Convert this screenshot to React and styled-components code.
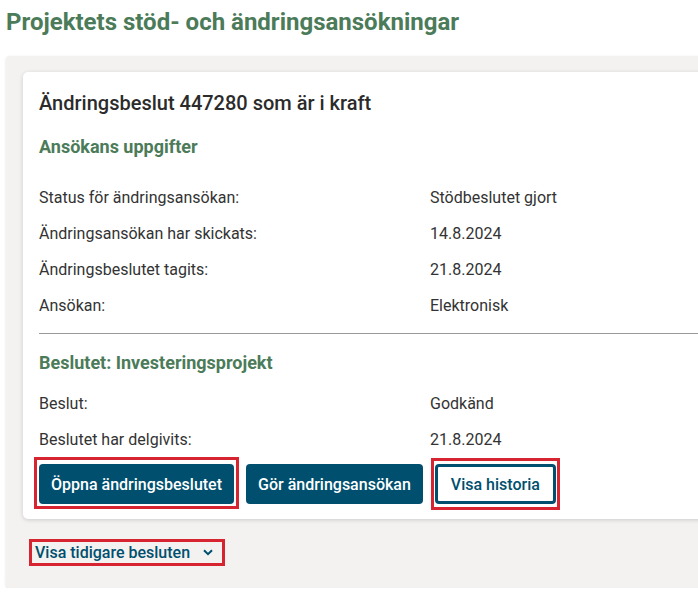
import React from "react";
import styled, { createGlobalStyle } from "styled-components";

const Global = createGlobalStyle`
  html, body { margin: 0; padding: 0; background: #fff; overflow: hidden; }
  body { font-family: Roboto, "Liberation Sans", Arial, sans-serif; color: #333; }
  * { box-sizing: border-box; }
`;

const Page = styled.div`
  padding: 6px 0 0 6px;
  width: 800px;
`;

const Title = styled.h1`
  margin: 0 0 18px 0;
  font-size: 24px;
  line-height: 32px;
  font-weight: 700;
  color: #4b7b59;
`;

const Panel = styled.section`
  width: 760px;
  background: #f3f2f1;
  border-radius: 4px;
  box-shadow: 0 1px 3px rgba(0, 0, 0, 0.12);
  padding: 16px 0 25px 17px;
`;

const Card = styled.div`
  background: #fff;
  border-radius: 5px;
  box-shadow: 0 1px 4px rgba(0, 0, 0, 0.16);
  padding: 17px 16px 15px 16px;
  margin-bottom: 23px;
`;

const CardTitle = styled.h2`
  margin: 0 0 18px 0;
  font-size: 20px;
  line-height: 28px;
  font-weight: 500;
  color: #2b2b2b;
`;

const SectionTitle = styled.h3`
  margin: 0 0 ${(p) => p.$bottom || 0}px 0;
  font-size: 18px;
  line-height: 24px;
  font-weight: 700;
  color: #4b7b59;
`;

const InfoList = styled.dl`
  display: grid;
  grid-template-columns: 391px 1fr;
  margin: 0;
`;

const Label = styled.dt`
  font-size: 16px;
  line-height: 36px;
  margin: 0;
`;

const Value = styled.dd`
  font-size: 16px;
  line-height: 36px;
  margin: 0;
`;

const Divider = styled.hr`
  border: none;
  border-top: 1px solid #9a9a9a;
  margin: 9px 0 17px 0;
`;

const Actions = styled.div`
  display: flex;
  gap: 12px;
  margin-top: 6px;
`;

const Button = styled.button`
  position: relative;
  height: 40px;
  padding: 0 ${(p) => (p.$secondary ? 13 : 12)}px;
  font-family: inherit;
  font-size: 16px;
  font-weight: 500;
  border-radius: 4px;
  cursor: pointer;
  border: ${(p) => (p.$secondary ? "3px" : "0")} solid #004f6e;
  background: ${(p) => (p.$secondary ? "#fff" : "#004f6e")};
  color: ${(p) => (p.$secondary ? "#004f6e" : "#fff")};
  outline: none;

  &::after {
    content: "";
    display: ${(p) => (p.$focus ? "block" : "none")};
    position: absolute;
    inset: ${(p) => (p.$secondary ? "-9px -7px -9px -7px" : "-7px -5px -5px -5px")};
    border: 3px solid #d62430;
    pointer-events: none;
  }
`;

const Toggle = styled.button`
  display: inline-flex;
  align-items: center;
  gap: 13px;
  height: 21px;
  padding: 0 9px 0 3px;
  margin-left: 9px;
  border: none;
  background: transparent;
  font-family: inherit;
  font-size: 16px;
  line-height: 21px;
  font-weight: 500;
  color: #004f6e;
  outline: 3px solid #d62430;
  outline-offset: 0;
  cursor: pointer;
`;

const Chevron = () => (
  <svg width="10" height="7" viewBox="0 0 10 7" aria-hidden="true">
    <polyline points="1,1.2 5,5.2 9,1.2" fill="none" stroke="#004f6e" strokeWidth="2" />
  </svg>
);

const details = [
  ["Status för ändringsansökan:", "Stödbeslutet gjort"],
  ["Ändringsansökan har skickats:", "14.8.2024"],
  ["Ändringsbeslutet tagits:", "21.8.2024"],
  ["Ansökan:", "Elektronisk"],
];

const decision = [
  ["Beslut:", "Godkänd"],
  ["Beslutet har delgivits:", "21.8.2024"],
];

const Rows = ({ items }) => (
  <InfoList>
    {items.map(([l, v]) => (
      <React.Fragment key={l}>
        <Label>{l}</Label>
        <Value>{v}</Value>
      </React.Fragment>
    ))}
  </InfoList>
);

export default function App() {
  return (
    <Page>
      <Global />
      <Title>Projektets stöd- och ändringsansökningar</Title>
      <Panel>
        <Card>
          <CardTitle>Ändringsbeslut 447280 som är i kraft</CardTitle>
          <SectionTitle $bottom={21}>Ansökans uppgifter</SectionTitle>
          <Rows items={details} />
          <Divider />
          <SectionTitle $bottom={11}>Beslutet: Investeringsprojekt</SectionTitle>
          <Rows items={decision} />
          <Actions>
            <Button $focus>Öppna ändringsbeslutet</Button>
            <Button>Gör ändringsansökan</Button>
            <Button $secondary $focus>Visa historia</Button>
          </Actions>
        </Card>
        <Toggle>
          Visa tidigare besluten
          <Chevron />
        </Toggle>
      </Panel>
    </Page>
  );
}
